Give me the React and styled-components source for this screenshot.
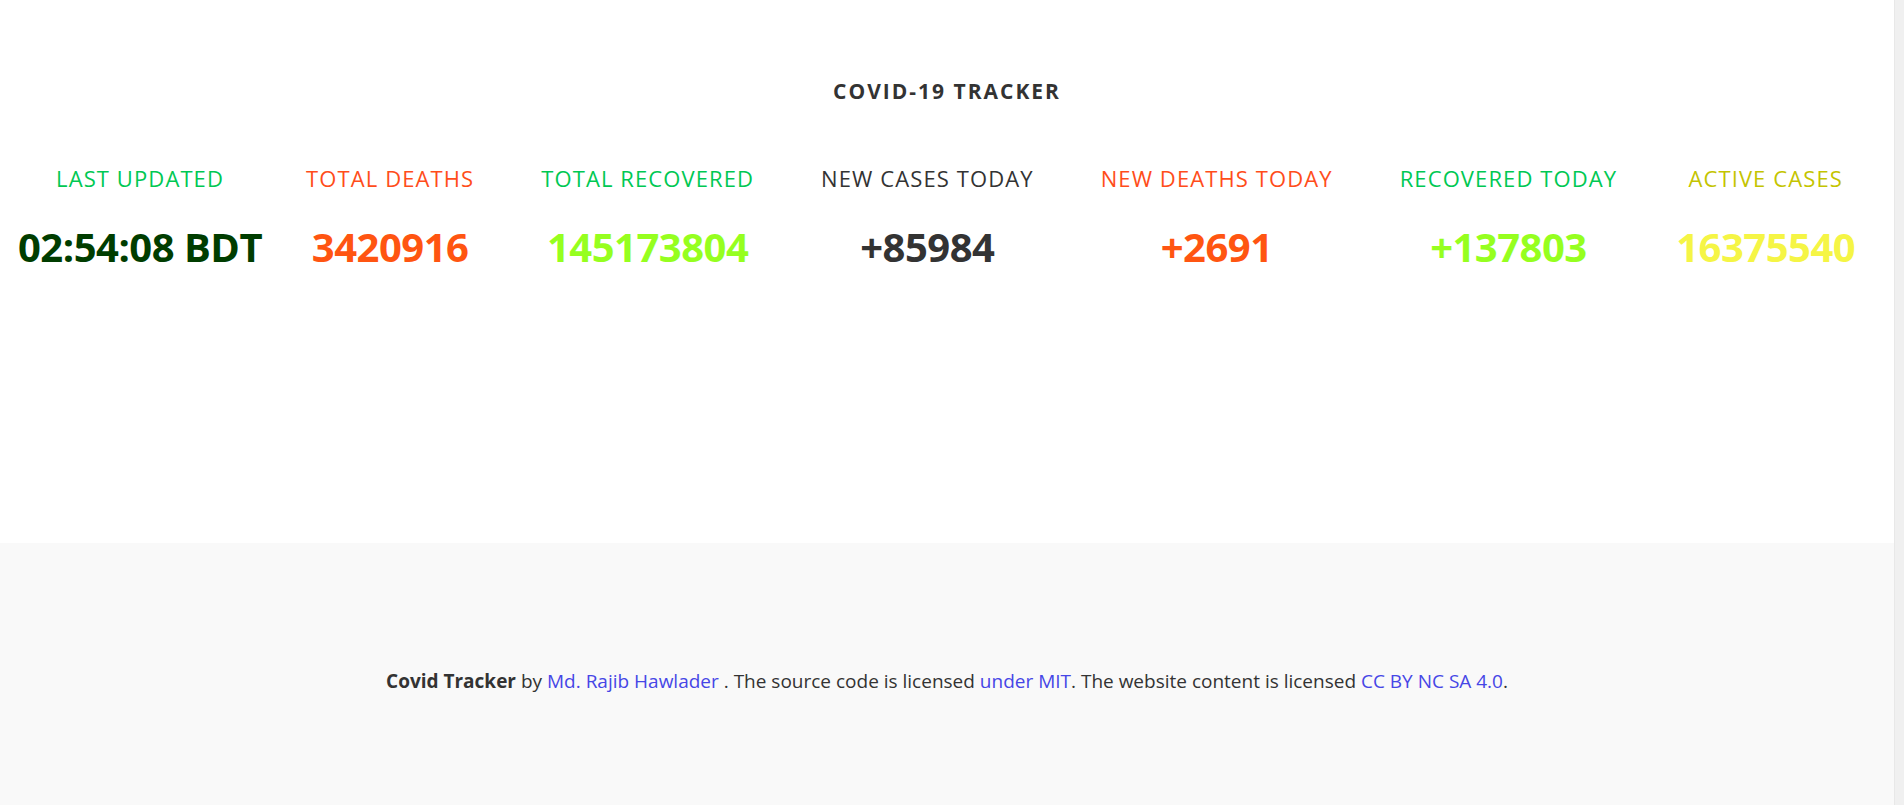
import React from "react";
import styled, { createGlobalStyle } from "styled-components";

const Global = createGlobalStyle`
  html, body { margin: 0; padding: 0; }
  body { font-family: "Open Sans", "Noto Sans", sans-serif; color: #333; background: #fff; }
`;

const Page = styled.div`
  display: flex;
  width: 100%;
  height: 805px;
  overflow: hidden;
`;

const Main = styled.div`
  flex: 1;
  display: flex;
  flex-direction: column;
`;

const Gutter = styled.div`
  width: 9px;
  background: #f0f0f0;
  border-left: 1px solid #e8e8e8;
`;

const Hero = styled.section`
  height: 543px;
  background: #fff;
  display: flex;
  flex-direction: column;
  align-items: center;
`;

const Title = styled.h1`
  margin: 74px 0 0;
  font-size: 21px;
  font-weight: 700;
  letter-spacing: 2px;
  color: #333;
  line-height: 34px;
`;

const Stats = styled.div`
  display: flex;
  justify-content: flex-start;
  box-sizing: border-box;
  width: 100%;
  padding-left: 18px;
  margin-top: 57px;
`;

const Stat = styled.div`
  display: flex;
  flex-direction: column;
  align-items: center;
  gap: 31px;
  margin-left: ${(p) => p.$before}px;
`;

const Label = styled.div`
  font-size: 22px;
  font-weight: 400;
  letter-spacing: 1.1px;
  color: ${(p) => p.$color};
  white-space: nowrap;
  line-height: 26px;
`;

const Value = styled.div`
  font-size: 40px;
  font-weight: 700;
  letter-spacing: -0.5px;
  color: ${(p) => p.$color};
  white-space: nowrap;
  line-height: 50px;
`;

const Footer = styled.footer`
  flex: 1;
  background: #f9f9f9;
  display: flex;
  align-items: center;
  justify-content: center;
  font-size: 19px;
  color: #333;
`;

const FooterText = styled.p`
  margin: 14px 0 0;
`;

const Strong = styled.b`
  font-weight: 700;
`;

const Link = styled.a`
  color: #4646e6;
  text-decoration: none;
`;

const stats = [
  { label: "LAST UPDATED", labelColor: "#00c853", value: "02:54:08 BDT", valueColor: "#003d00", before: 0 },
  { label: "TOTAL DEATHS", labelColor: "#ff4d1a", value: "3420916", valueColor: "#ff5511", before: 44 },
  { label: "TOTAL RECOVERED", labelColor: "#00c853", value: "145173804", valueColor: "#96ff1f", before: 67 },
  { label: "NEW CASES TODAY", labelColor: "#333333", value: "+85984", valueColor: "#333333", before: 67 },
  { label: "NEW DEATHS TODAY", labelColor: "#ff4d1a", value: "+2691", valueColor: "#ff5511", before: 67 },
  { label: "RECOVERED TODAY", labelColor: "#00c853", value: "+137803", valueColor: "#96ff1f", before: 67 },
  { label: "ACTIVE CASES", labelColor: "#c4c400", value: "16375540", valueColor: "#f5f545", before: 59 },
];

export default function App() {
  return (
    <>
      <Global />
      <Page>
        <Main>
          <Hero>
            <Title>COVID-19 TRACKER</Title>
            <Stats>
              {stats.map((s) => (
                <Stat key={s.label} $before={s.before}>
                  <Label $color={s.labelColor}>{s.label}</Label>
                  <Value $color={s.valueColor}>{s.value}</Value>
                </Stat>
              ))}
            </Stats>
          </Hero>
          <Footer>
            <FooterText>
              <Strong>Covid Tracker</Strong> by <Link href="#">Md. Rajib Hawlader</Link> . The source code is licensed{" "}
              <Link href="#">under MIT</Link>. The website content is licensed <Link href="#">CC BY NC SA 4.0</Link>.
            </FooterText>
          </Footer>
        </Main>
        <Gutter />
      </Page>
    </>
  );
}
